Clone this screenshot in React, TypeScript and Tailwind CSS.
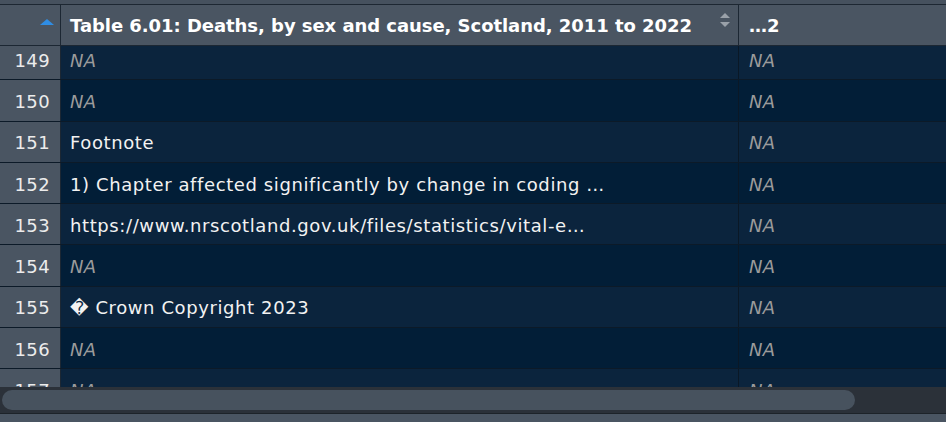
import React from 'react';

type Row = { n: number; text: string | null };

const rows: Row[] = [
  { n: 149, text: null },
  { n: 150, text: null },
  { n: 151, text: 'Footnote' },
  { n: 152, text: '1) Chapter affected significantly by change in coding \u2026' },
  { n: 153, text: 'https://www.nrscotland.gov.uk/files/statistics/vital-e\u2026' },
  { n: 154, text: null },
  { n: 155, text: '\uFFFD Crown Copyright 2023' },
  { n: 156, text: null },
  { n: 157, text: null },
];

const NA = () => <span className="italic text-[#9b9b9b] tracking-[0.3px]">NA</span>;

const App: React.FC = () => {
  return (
    <div
      className="w-[946px] h-[422px] bg-[#4a5562] flex flex-col overflow-hidden text-[18px]"
      style={{ fontFamily: '"DejaVu Sans", Verdana, sans-serif' }}
    >
      <div className="h-[4px] bg-[#46515e] border-b border-[#1d2732] box-content" />

      {/* header */}
      <div className="h-[41px] flex bg-[#4a5562] border-b border-[#1c2733] shrink-0">
        <div className="w-[61px] shrink-0 border-r border-[#1c2733] relative">
          <svg className="absolute left-[40px] top-[14px]" width="14" height="6" viewBox="0 0 14 6">
            <polygon points="7,0 14,6 0,6" fill="#2f8de4" />
          </svg>
        </div>
        <div className="w-[678px] shrink-0 border-r border-[#1c2733] flex items-center pl-[9px] pt-[1px] relative">
          <span className="font-bold text-white tracking-[-0.05px]">
            Table 6.01: Deaths, by sex and cause, Scotland, 2011 to 2022
          </span>
          <svg className="absolute left-[659px] top-[8px]" width="10" height="14" viewBox="0 0 10 14">
            <polygon points="5,0 10,5 0,5" fill="#9aa1a9" />
            <polygon points="0,9 10,9 5,14" fill="#9aa1a9" />
          </svg>
        </div>
        <div className="flex-1 flex items-center pl-[10px] pt-[1px]">
          <span className="font-bold text-white">…2</span>
        </div>
      </div>

      {/* body */}
      <div className="h-[341px] overflow-hidden shrink-0">
        <div className="-mt-[7px]">
          {rows.map((r) => (
            <div
              key={r.n}
              className={`h-[41.3px] flex border-b border-[#0c1a28] pt-[2px] ${
                r.n % 2 === 1 ? 'bg-[#0b243d]' : 'bg-[#021e37]'
              }`}
            >
              <div className="w-[61px] shrink-0 bg-[#4a5562] border-r border-[#1c2733] -mt-[2px] pt-[2px] flex items-center justify-end pr-[10px] text-[#ececec] tracking-[0.4px]">
                {r.n}
              </div>
              <div className="w-[678px] shrink-0 border-r border-[#0a1826] -mt-[2px] pt-[2px] flex items-center pl-[9px] text-[#f2f2f2] whitespace-nowrap tracking-[0.6px]">
                {r.text ? r.text : <NA />}
              </div>
              <div className="flex-1 flex items-center pl-[10px]">
                <NA />
              </div>
            </div>
          ))}
        </div>
      </div>

      {/* horizontal scrollbar */}
      <div className="h-[27px] bg-[#2b3139] shrink-0 flex items-center px-[2px] border-b border-[#1d2329]">
        <div className="w-[853px] h-[20px] rounded-full bg-[#47525e]" />
      </div>
      <div className="flex-1 bg-[#4a5562]" />
    </div>
  );
};

export default App;
